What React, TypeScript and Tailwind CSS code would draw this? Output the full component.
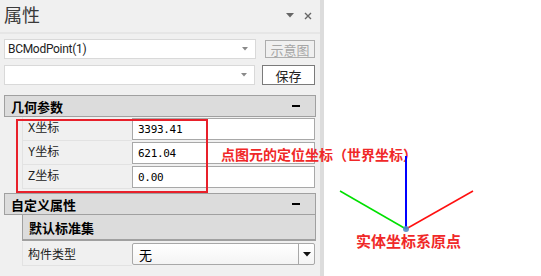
import React from "react";

const cjk = { fontFamily: '"Noto Sans CJK SC", "Noto Sans", sans-serif' };
const lbl = { fontFamily: '"Liberation Mono", "Noto Sans CJK SC", monospace' };
const mono = { fontFamily: '"DejaVu Sans Mono", "Liberation Mono", monospace', letterSpacing: "-0.3px" };

function Combo({ text }: { text?: string }) {
  return (
    <div className="flex-1 h-[20px] bg-white border border-[#d9d9d9] flex items-center justify-between pl-[3px] pr-[7px]">
      <span className="text-[12px] text-[#222] leading-none" style={{ fontFamily: 'Roboto, "Noto Sans", sans-serif', letterSpacing: "-0.3px" }}>
        {text}
      </span>
      <svg width="6" height="4" viewBox="0 0 6 4"><path d="M0 0H6L3 3.5Z" fill="#8a8a8a" /></svg>
    </div>
  );
}

function Header({ title }: { title: string }) {
  return (
    <div className="h-[22px] bg-[#dcdcdc] border border-[#a0a0a0] flex items-center justify-between pl-[6px] pr-[15px]">
      <span className="text-[13px] font-bold text-black leading-none" style={cjk}>{title}</span>
      <span className="w-[8px] h-[2px] bg-black" />
    </div>
  );
}

function Row({ label, value, combo }: { label: string; value: string; combo?: boolean }) {
  return (
    <div className="h-[24px] flex pl-[18px]">
      <div className="w-[110px] h-full border-b border-l border-[#e2e2e2] flex items-center pl-[5px]">
        <span className="text-[12px] text-[#222] leading-none" style={label.match(/^[XYZ]/) ? lbl : cjk}>{label}</span>
      </div>
      <div className="flex-1 pt-[1px] pb-[1px] pr-[1px]">
        {combo ? (
          <div className="h-[22px] bg-gradient-to-b from-white to-[#f4f4f4] border border-[#a8a8a8] rounded-[2px] flex items-center">
            <span className="flex-1 pl-[6px] text-[13px] text-black leading-none" style={cjk}>{value}</span>
            <div className="w-[16px] h-full border-l border-[#a8a8a8] flex items-center justify-center">
              <svg width="8" height="5" viewBox="0 0 8 5"><path d="M0 0H8L4 4.5Z" fill="#111" /></svg>
            </div>
          </div>
        ) : (
          <div className="h-[22px] bg-white border border-[#a8a8a8] flex items-center pl-[5px]">
            <span className="text-[11px] text-black leading-none" style={mono}>{value}</span>
          </div>
        )}
      </div>
    </div>
  );
}

export default function App() {
  return (
    <div className="relative w-[541px] h-[276px] bg-white flex overflow-hidden">
      <div className="w-[320px] h-full bg-[#f0f0f0] flex flex-col">
        <div className="h-[34px] flex items-center justify-between pl-[4px] pr-[8px] border-b-2 border-[#e6e6e6]">
          <span className="text-[18px] text-[#3a3a3a] leading-none mb-[4px]" style={cjk}>属性</span>
          <div className="flex items-center gap-[10px] mb-[1px]">
            <svg width="8" height="5" viewBox="0 0 8 5"><path d="M0 0H8L4 4.5Z" fill="#666" /></svg>
            <svg width="8" height="8" viewBox="0 0 8 8"><path d="M1 1L7 7M7 1L1 7" stroke="#666" strokeWidth="1.4" /></svg>
          </div>
        </div>
        <div className="flex flex-col gap-[6px] pt-[5px] pl-[4px] pr-[5px]">
          <div className="flex items-center">
            <Combo text="BCModPoint(1)" />
            <div className="ml-[9px] w-[50px] h-[18px] border border-[#adadad] flex items-center justify-center">
              <span className="text-[13px] text-[#a6a6a6] leading-none" style={cjk}>示意图</span>
            </div>
          </div>
          <div className="flex items-center">
            <Combo />
            <div className="ml-[7px] w-[53px] h-[20px] bg-white border border-[#7a7a7a] flex items-center justify-center">
              <span className="text-[13px] text-[#222] leading-none" style={cjk}>保存</span>
            </div>
          </div>
        </div>
        <div className="pl-[4px] pr-[4px] pt-[10px] flex flex-col">
          <Header title="几何参数" />
          <Row label="X坐标" value="3393.41" />
          <Row label="Y坐标" value="621.04" />
          <Row label="Z坐标" value="0.00" />
          <div className="h-[4px]" />
          <Header title="自定义属性" />
          <div className="ml-[18px] h-[26px] bg-[#dcdcdc] border-x border-b-2 border-[#a0a0a0] flex items-center pl-[6px]">
            <span className="text-[13px] font-bold text-black leading-none" style={cjk}>默认标准集</span>
          </div>
          <div className="h-[1px]" />
          <Row label="构件类型" value="无" combo />
        </div>
      </div>
      <div className="w-[4px] h-full bg-[#dcdcdc]" />
      <div className="flex-1 h-full bg-white" />

      {/* annotations */}
      <div className="absolute left-[16px] top-[119px] w-[192px] h-[74px] border-2 border-[#e8202a] pointer-events-none" />
      <span className="absolute left-[221px] top-[145px] text-[14px] font-bold text-[#f02828] leading-[18px] whitespace-nowrap" style={cjk}>
        点图元的定位坐标（世界坐标）
      </span>
      <svg className="absolute left-0 top-0" width="541" height="276" viewBox="0 0 541 276">
        <line x1="406" y1="229" x2="340" y2="191" stroke="#00e000" strokeWidth="1.5" />
        <line x1="406" y1="229" x2="473" y2="191" stroke="#ff1010" strokeWidth="1.5" />
        <line x1="406" y1="229" x2="406" y2="156" stroke="#0000ff" strokeWidth="2" />
        <circle cx="406" cy="229" r="3" fill="#4f8fc8" opacity="0.9" />
      </svg>
      <span className="absolute left-[356px] top-[232px] text-[15px] font-bold text-[#f02828] leading-[18px] whitespace-nowrap" style={cjk}>
        实体坐标系原点
      </span>
    </div>
  );
}
